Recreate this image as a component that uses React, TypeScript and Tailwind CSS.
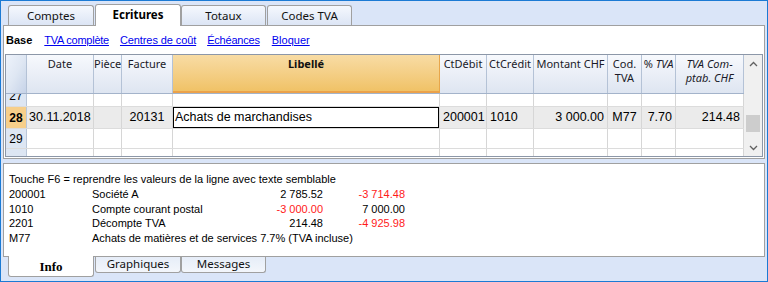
import React from "react";

const ui = "font-['Segoe_UI','Noto_Sans',sans-serif]";
const grid = "font-['Liberation_Sans',Arial,sans-serif]";
const tah = "font-['Tahoma','Liberation_Sans',sans-serif]";

type Col = { w: string; head: React.ReactNode };

const cols: Col[] = [
  { w: "w-[67px]", head: "Date" },
  { w: "w-[28px]", head: "Pièce" },
  { w: "w-[51px]", head: "Facture" },
  { w: "w-[267px]", head: "Libellé" },
  { w: "w-[47px]", head: "CtDébit" },
  { w: "w-[47px]", head: "CtCrédit" },
  { w: "w-[74px]", head: "Montant CHF" },
  { w: "w-[34px]", head: <>Cod.<br />TVA</> },
  { w: "w-[34px]", head: <>% <i>TVA</i></> },
  { w: "w-[68px]", head: <i>TVA Com-<br />ptab. CHF</i> },
];

const row28 = ["30.11.2018", "", "20131", "Achats de marchandises", "200001", "1010", "3 000.00", "M77", "7.70", "214.48"];

function Row({ n, h, data, active }: { n: string; h: string; data?: string[]; active?: boolean }) {
  return (
    <div className={`flex ${h} border-b border-[#dcdcdc]`}>
      <div
        className={`w-[21px] shrink-0 border-r border-[#b9c6d8] flex items-center justify-center text-[12px] ${
          active ? "bg-[#f7cf8a] font-bold" : "bg-[#dde6f3]"
        }`}
      >
        {n}
      </div>
      {cols.map((c, i) => {
        const v = data ? data[i] : "";
        if (active && i === 3) {
          return (
            <div key={i} className={`${c.w} shrink-0 border-r border-[#d6d6d6] bg-white`}>
              <div className="h-full border border-black flex items-center pl-[1px] text-[12.5px]">{v}</div>
            </div>
          );
        }
        return (
          <div
            key={i}
            className={`${c.w} shrink-0 border-r border-[#d6d6d6] flex items-center text-[12.5px] ${
              active ? "bg-[#ebebeb]" : "bg-white"
            } ${i === 7 || i === 2 ? "justify-center" : i === 6 || i === 8 || i === 9 ? "justify-end pr-[3px]" : i === 0 ? "pl-[2px]" : "pl-[3px]"}`}
          >
            {v}
          </div>
        );
      })}
    </div>
  );
}

function Chevron({ up }: { up?: boolean }) {
  return (
    <svg width="9" height="6" viewBox="0 0 9 6" className="text-[#606060]">
      <polyline
        points={up ? "1,5 4.5,1.5 8,5" : "1,1 4.5,4.5 8,1"}
        fill="none"
        stroke="currentColor"
        strokeWidth="1.3"
      />
    </svg>
  );
}

export default function App() {
  return (
    <div className={`w-[768px] h-[282px] overflow-hidden bg-[#dae5f8] border border-[#1b7ad4] flex flex-col ${ui}`}>
      {/* top tabs */}
      <div className="h-[24px] flex items-end pl-[7px] relative z-10">
        <div className="w-[86px] h-[20px] border border-b-0 border-[#a0a0a0] rounded-t-[3px] bg-linear-to-b from-[#f5f8fd] to-[#dce5f5] text-center text-[11.5px] leading-[16px] pt-[2px] text-[#111]">
          Comptes
        </div>
        <div className="ml-[1px] w-[86px] h-[22px] -mb-px border border-b-0 border-[#a0a0a0] rounded-t-[3px] bg-white text-center text-[11.5px] font-bold leading-[16px] pt-[2px] text-black">
          Ecritures
        </div>
        <div className="w-[85px] h-[20px] border border-b-0 border-[#a0a0a0] rounded-t-[3px] bg-linear-to-b from-[#f5f8fd] to-[#dce5f5] text-center text-[11.5px] leading-[16px] pt-[2px] text-[#111]">
          Totaux
        </div>
        <div className="ml-[1px] w-[85px] h-[20px] border border-b-0 border-[#a0a0a0] rounded-t-[3px] bg-linear-to-b from-[#f5f8fd] to-[#dce5f5] text-center text-[11.5px] leading-[16px] pt-[2px] text-[#111]">
          Codes TVA
        </div>
      </div>

      {/* main panel */}
      <div className="ml-[2px] w-[762px] h-[134px] border border-[#a0a0a0] bg-white flex flex-col">
        <div className={`h-[28px] flex items-start pt-[7px] pl-[2px] text-[11px] leading-[15px] ${tah}`}>
          <span className="font-bold text-black">Base</span>
          <span className="ml-[12px] text-[#0000ee] underline tracking-[-0.25px]">TVA complète</span>
          <span className="ml-[11px] text-[#0000ee] underline tracking-[-0.1px]">Centres de coût</span>
          <span className="ml-[11px] text-[#0000ee] underline tracking-[-0.2px]">Échéances</span>
          <span className="ml-[12px] text-[#0000ee] underline">Bloquer</span>
        </div>

        <div className="ml-[1px] w-[758px] h-[103px] border border-[#8c97a8] flex">
          <div className="flex-1 flex flex-col overflow-hidden">
            {/* header */}
            <div className="flex h-[39px] shrink-0 border-b border-[#a3b3ca]">
              <div className="w-[21px] shrink-0 border-r border-[#b4c2d6] bg-linear-to-br from-[#eef3fb] via-[#dfe7f3] to-[#c6d3e8]" />
              {cols.map((c, i) =>
                i === 3 ? (
                  <div
                    key={i}
                    className={`${c.w} shrink-0 border-r border-b-2 border-r-[#e8a64a] border-b-[#eba24a] bg-linear-to-b from-[#f8dca4] to-[#f0c266] text-center text-[11px] leading-[14px] pt-[2px] font-bold text-[#111]`}
                  >
                    {c.head}
                  </div>
                ) : (
                  <div
                    key={i}
                    className={`${c.w} shrink-0 border-r border-[#b4c2d6] bg-linear-to-b from-[#f7f9fd] to-[#dee5f1] text-center text-[11px] leading-[14px] pt-[2px] text-[#1a1a28] whitespace-nowrap overflow-hidden`}
                  >
                    {c.head}
                  </div>
                )
              )}
            </div>
            {/* body */}
            <div className={`flex-1 overflow-hidden ${grid}`}>
              <div className="-mt-[9px]">
                <Row n="27" h="h-[22px]" />
                <Row n="28" h="h-[22px]" data={row28} active />
                <Row n="29" h="h-[20px]" />
                <Row n="" h="h-[21px]" />
              </div>
            </div>
          </div>
          {/* scrollbar */}
          <div className="w-[18px] shrink-0 bg-[#f0f0f0] flex flex-col">
            <div className="h-[17px] flex items-center justify-center">
              <Chevron up />
            </div>
            <div className="flex-1">
              <div className="mt-[43px] mx-[2px] h-[17px] bg-[#cdcdcd]" />
            </div>
            <div className="h-[17px] flex items-center justify-center">
              <Chevron />
            </div>
          </div>
        </div>
      </div>

      {/* info panel */}
      <div className={`mt-[4px] ml-[2px] w-[762px] h-[94px] border border-[#a0a0a0] bg-white pt-[8px] pl-[5px] text-[11px] leading-[14.8px] text-black ${tah}`}>
        <div>Touche F6 = reprendre les valeurs de la ligne avec texte semblable</div>
        <div className="flex">
          <span className="w-[83px]">200001</span>
          <span className="w-[161px]">Société A</span>
          <span className="w-[70px] text-right">2 785.52</span>
          <span className="w-[82px] text-right text-[#ff1a1a]">-3 714.48</span>
        </div>
        <div className="flex">
          <span className="w-[83px]">1010</span>
          <span className="w-[161px]">Compte courant postal</span>
          <span className="w-[70px] text-right text-[#ff1a1a]">-3 000.00</span>
          <span className="w-[82px] text-right">7 000.00</span>
        </div>
        <div className="flex">
          <span className="w-[83px]">2201</span>
          <span className="w-[161px]">Décompte TVA</span>
          <span className="w-[70px] text-right">214.48</span>
          <span className="w-[82px] text-right text-[#ff1a1a]">-4 925.98</span>
        </div>
        <div className="flex">
          <span className="w-[83px]">M77</span>
          <span className="whitespace-nowrap">Achats de matières et de services 7.7% (TVA incluse)</span>
        </div>
      </div>

      {/* bottom tabs */}
      <div className="flex items-start pl-[7px] -mt-px relative z-10">
        <div className="w-[86px] h-[21px] bg-white border border-t-0 border-[#a0a0a0] rounded-b-[3px] text-center font-['Liberation_Serif',serif] font-bold text-[13px] leading-[16px] pt-[3px]">
          Info
        </div>
        <div className="mt-px ml-[1px] w-[86px] h-[16px] border border-t-0 border-[#a0a0a0] rounded-b-[3px] bg-linear-to-b from-[#e6edf8] to-[#f3f6fb] text-center text-[11.5px] leading-[14px] text-[#111]">
          Graphiques
        </div>
        <div className="mt-px w-[85px] h-[16px] border border-t-0 border-[#a0a0a0] rounded-b-[3px] bg-linear-to-b from-[#e6edf8] to-[#f3f6fb] text-center text-[11.5px] leading-[14px] text-[#111]">
          Messages
        </div>
      </div>
    </div>
  );
}
